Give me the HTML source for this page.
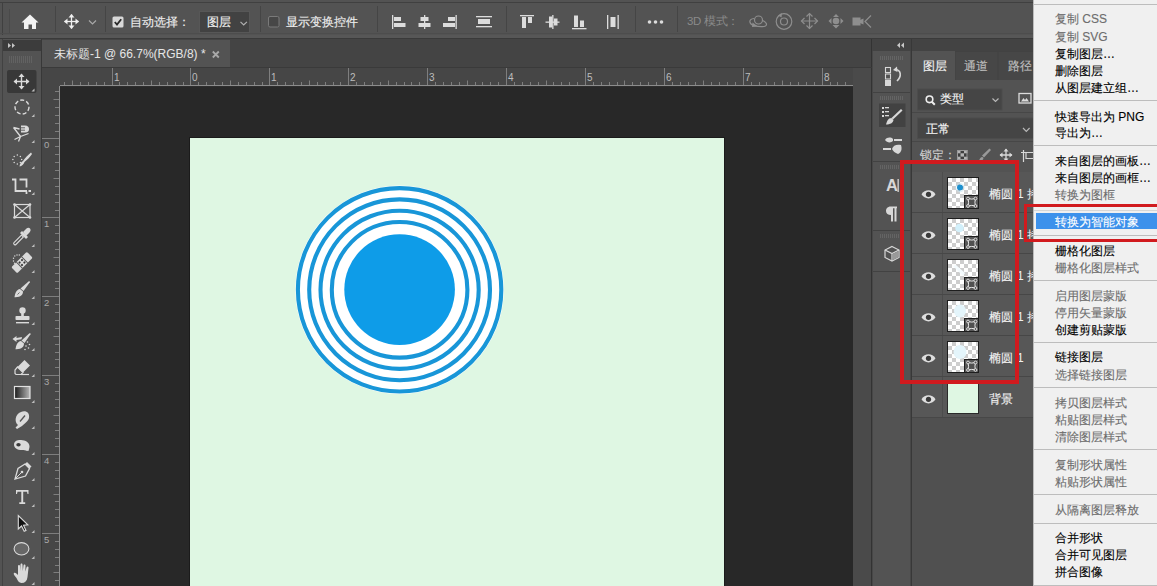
<!DOCTYPE html>
<html><head><meta charset="utf-8">
<style>
*{margin:0;padding:0;box-sizing:border-box}
html,body{width:1157px;height:586px;overflow:hidden;background:#535353;font-family:"Liberation Sans",sans-serif;}
.a{position:absolute}
svg{position:absolute;overflow:visible}
.t{position:absolute;white-space:nowrap;font-size:12px;line-height:14px;color:#e8e8e8}
.m{font-size:12px;line-height:14px;-webkit-text-stroke:0.12px currentColor}
.b{-webkit-text-stroke:0.15px currentColor}
.sep{position:absolute;width:1px;background:#3f3f3f}
</style></head><body>
<!-- options bar -->
<div class="a" style="left:0;top:0;width:1157px;height:3px;background:#535353"></div>
<div class="a" style="left:0;top:2px;width:1157px;height:1px;background:#404040"></div>
<div class="a" style="left:2px;top:2px;width:1px;height:36px;background:#404040"></div>
<div class="a" style="left:0;top:33px;width:1157px;height:1px;background:#4d4d4d"></div>
<div class="a" style="left:0;top:35px;width:1157px;height:3px;background:#575757"></div>
<div class="a" style="left:0;top:38px;width:1157px;height:1px;background:#3a3a3a"></div>


<!-- options bar content -->
<div class="sep" style="left:9px;top:9px;height:24px;background:#4a4a4a"></div>
<div class="sep" style="left:55px;top:6px;height:26px;background:#454545"></div>
<div class="sep" style="left:105px;top:6px;height:26px;background:#454545"></div>
<div class="sep" style="left:260px;top:6px;height:26px;background:#454545"></div>
<div class="sep" style="left:377px;top:6px;height:26px;background:#454545"></div>
<div class="sep" style="left:506px;top:6px;height:26px;background:#454545"></div>
<div class="sep" style="left:635px;top:6px;height:26px;background:#454545"></div>
<div class="sep" style="left:677px;top:6px;height:26px;background:#454545"></div>
<svg style="left:0;top:0" width="1157" height="38">
 <!-- home -->
 <path d="M30 14.5 L38.5 22.5 L36 22.5 L36 29 L32 29 L32 24.5 L28.5 24.5 L28.5 29 L24 29 L24 22.5 L21.5 22.5 Z" fill="#f2f2f2"/>
 <!-- move -->
 <g stroke="#f0f0f0" stroke-width="1.3" fill="#f0f0f0">
  <line x1="64.5" y1="21.5" x2="78.5" y2="21.5"/><line x1="71.5" y1="14.5" x2="71.5" y2="28.5"/>
 </g>
 <g fill="#f0f0f0">
  <path d="M71.5 14 L74.5 17.5 L68.5 17.5Z"/><path d="M71.5 29 L74.5 25.5 L68.5 25.5Z"/>
  <path d="M64 21.5 L67.5 18.5 L67.5 24.5Z"/><path d="M79 21.5 L75.5 18.5 L75.5 24.5Z"/>
 </g>
 <path d="M89 20.5 L92.5 24 L96 20.5" stroke="#a8a8a8" stroke-width="1.2" fill="none"/>
 <!-- checkbox -->
 <rect x="112.5" y="16.5" width="11" height="11" rx="1.5" fill="#d8d8d8"/>
 <path d="M114.8 22 L117 24.6 L121.2 19.2" stroke="#2a2a2a" stroke-width="1.8" fill="none"/>
 <!-- dropdown -->
 <rect x="199.5" y="11.5" width="50" height="21" fill="#424242" stroke="#575757" stroke-width="1"/>
 <path d="M240.5 21.8 L243.7 25 L246.9 21.8" stroke="#b0b0b0" stroke-width="1.2" fill="none"/>
 <!-- empty checkbox -->
 <rect x="268.5" y="16.5" width="10.5" height="10.5" rx="1.5" fill="#474747" stroke="#7a7a7a" stroke-width="1"/>
 <!-- align left -->
 <g fill="#dcdcdc">
  <rect x="392" y="15" width="1.3" height="14"/><rect x="394" y="17" width="7" height="4"/><rect x="394" y="23" width="11.5" height="4"/>
  <rect x="424" y="15" width="1.3" height="14"/><rect x="420.5" y="17" width="8" height="4"/><rect x="418.5" y="23" width="12" height="4"/>
  <rect x="455.5" y="15" width="1.3" height="14"/><rect x="448" y="17" width="7" height="4"/><rect x="443" y="23" width="12" height="4"/>
  <rect x="476" y="16" width="16" height="1.3"/><rect x="478" y="19" width="12" height="5"/><rect x="476" y="26" width="16" height="1.3"/>
  <rect x="520" y="15" width="14" height="1.3"/><rect x="522" y="17" width="4" height="11"/><rect x="528" y="17" width="4" height="6"/>
  <rect x="552.2" y="15" width="1.3" height="14"/><rect x="549" y="16.5" width="3.5" height="11"/><rect x="554" y="18.5" width="3.5" height="7"/><rect x="545.5" y="21.5" width="14" height="1.3"/>
  <rect x="572" y="28" width="14.5" height="1.3"/><rect x="574" y="15.5" width="4" height="11.5"/><rect x="580" y="20.5" width="4" height="6.5"/>
  <rect x="607" y="15" width="1.3" height="14"/><rect x="617.5" y="15" width="1.3" height="14"/><rect x="610.5" y="17" width="5" height="10"/>
  <circle cx="649.5" cy="22" r="1.8"/><circle cx="655.5" cy="22" r="1.8"/><circle cx="661.5" cy="22" r="1.8"/>
 </g>
 <!-- 3d icons -->
 <g stroke="#8e8e8e" stroke-width="1.2" fill="none">
  <circle cx="758.5" cy="20" r="4"/>
  <path d="M754 18.5 C748 19 749 24 754 25.5 C759 27 767 27.5 766.5 24 C766 22 763 20.5 762 20.3"/>
  <circle cx="784" cy="21.5" r="7.8"/><circle cx="784" cy="21.5" r="3.5"/>
  <path d="M801.5 21 H817.5 M809.5 13.5 V29"/>
  <path d="M806.5 16.5 L809.5 13.5 L812.5 16.5 M806.5 25.5 L809.5 28.5 L812.5 25.5 M804.5 18 L801.5 21 L804.5 24 M814.5 18 L817.5 21 L814.5 24"/>
  <path d="M871 15.5 L865 21.5 L871 27.5"/>
 </g>
 <g fill="#8e8e8e">
  <path d="M778 15.5 L782 13.2 L781.5 17.5Z"/>
  <path d="M752.5 22.5 L758 26.5 L752 27Z"/>
  <circle cx="836" cy="21" r="3.3"/>
  <path d="M836 14 L839 17 L833 17Z M836 28.5 L839.5 25 L832.5 25Z M828.5 21 L831.5 18 L831.5 24Z M843.5 21 L840.5 18 L840.5 24Z"/>
  <rect x="852.5" y="17.5" width="8" height="8"/><path d="M860 20 L863.5 18.5 L863.5 24.5 L860 23Z"/>
 </g>
</svg>
<div class="t b" style="left:130px;top:15px;font-size:12px;color:#ececec">自动选择：</div>
<div class="t b" style="left:207px;top:15px;font-size:12px;color:#f0f0f0">图层</div>
<div class="t b" style="left:286px;top:15px;font-size:12px;color:#ececec">显示变换控件</div>
<div class="t" style="left:687px;top:14px;font-size:11.5px;letter-spacing:-0.3px;color:#8a8a8a">3D 模式：</div>

<!-- left toolbar -->
<div class="a" style="left:0;top:39px;width:41px;height:547px;background:#535353"></div>
<div class="a" style="left:41px;top:39px;width:1px;height:547px;background:#383838"></div>
<div class="a" style="left:2px;top:39px;width:1px;height:547px;background:#424242"></div>
<div class="a" style="left:3px;top:40px;width:38px;height:11px;background:#3c3c3c"></div>

<!-- toolbar icons appended later -->
<!-- doc tab bar -->
<div class="a" style="left:42px;top:39px;width:830px;height:29px;background:#444444"></div>
<div class="a" style="left:42px;top:40px;width:188px;height:28px;background:#535353"></div>

<div class="t" style="left:54px;top:47px;font-size:12px;color:#e6e6e6">未标题-1 @ 66.7%(RGB/8) *</div>
<svg style="left:0;top:0" width="300" height="70"><path d="M212.8 51.5 L218.8 57.5 M218.8 51.5 L212.8 57.5" stroke="#a9a9a9" stroke-width="1.8"/></svg>
<!-- rulers -->
<div class="a" style="left:42px;top:68px;width:811px;height:18px;background:#464646"></div>
<div class="a" style="left:42px;top:86px;width:18px;height:500px;background:#464646"></div>

<!-- pasteboard -->
<div class="a" style="left:60px;top:86px;width:793px;height:500px;background:#282828"></div>
<div class="a" style="left:853px;top:68px;width:19px;height:518px;background:#4a4a4a"></div>
<div class="a" style="left:871px;top:39px;width:1px;height:547px;background:#333"></div>

<!-- canvas -->
<div class="a" style="left:189px;top:137px;width:536px;height:460px;background:#1b1b1b"></div>
<div class="a" style="left:190px;top:138px;width:534px;height:460px;background:#dff7e3"></div>

<!-- circles -->
<svg style="left:0;top:0" width="1157" height="586">
 <circle cx="399.6" cy="289.8" r="104.2" fill="#ffffff"/>
 <g fill="none" stroke="#1896d8" stroke-width="4.1">
  <circle cx="399.6" cy="289.8" r="101.7"/>
  <circle cx="399.6" cy="289.8" r="90.4"/>
  <circle cx="399.6" cy="289.8" r="79.1"/>
  <circle cx="399.6" cy="289.8" r="67.8"/>
 </g>
 <circle cx="399.6" cy="289.6" r="55.3" fill="#0e9ce8"/>
</svg>
<!-- ruler ticks -->
<svg style="left:0;top:0" width="1157" height="586">
<rect x="42" y="67" width="830" height="1" fill="#3a3a3a"/>
<rect x="60" y="85" width="793" height="1" fill="#8c8c8c"/>
<rect x="59" y="86" width="1" height="500" fill="#8c8c8c"/>
<rect x="60" y="86" width="793" height="1" fill="#2e2e2e"/>
<path d="M64.5 82V85M72.5 80.5V85M80.5 82V85M88.5 82V85M96.5 82V85M104.5 82V85M112.5 68V85M119.5 82V85M127.5 82V85M135.5 82V85M143.5 82V85M151.5 80.5V85M159.5 82V85M167.5 82V85M175.5 82V85M183.5 82V85M190.5 68V85M198.5 82V85M206.5 82V85M214.5 82V85M222.5 82V85M230.5 80.5V85M238.5 82V85M246.5 82V85M254.5 82V85M262.5 82V85M269.5 68V85M277.5 82V85M285.5 82V85M293.5 82V85M301.5 82V85M309.5 80.5V85M317.5 82V85M325.5 82V85M333.5 82V85M340.5 82V85M348.5 68V85M356.5 82V85M364.5 82V85M372.5 82V85M380.5 82V85M388.5 80.5V85M396.5 82V85M404.5 82V85M411.5 82V85M419.5 82V85M427.5 68V85M435.5 82V85M443.5 82V85M451.5 82V85M459.5 82V85M467.5 80.5V85M475.5 82V85M482.5 82V85M490.5 82V85M498.5 82V85M506.5 68V85M514.5 82V85M522.5 82V85M530.5 82V85M538.5 82V85M546.5 80.5V85M553.5 82V85M561.5 82V85M569.5 82V85M577.5 82V85M585.5 68V85M593.5 82V85M601.5 82V85M609.5 82V85M617.5 82V85M624.5 80.5V85M632.5 82V85M640.5 82V85M648.5 82V85M656.5 82V85M664.5 68V85M672.5 82V85M680.5 82V85M688.5 82V85M695.5 82V85M703.5 80.5V85M711.5 82V85M719.5 82V85M727.5 82V85M735.5 82V85M743.5 68V85M751.5 82V85M759.5 82V85M766.5 82V85M774.5 82V85M782.5 80.5V85M790.5 82V85M798.5 82V85M806.5 82V85M814.5 82V85M822.5 68V85M830.5 82V85M837.5 82V85M845.5 82V85" stroke="#7e7e7e" stroke-width="1"/>
<path d="M55 91.5H59M53.5 99.5H59M55 107.5H59M55 115.5H59M55 123.5H59M55 131.5H59M42 138.5H59M55 146.5H59M55 154.5H59M55 162.5H59M55 170.5H59M53.5 178.5H59M55 186.5H59M55 194.5H59M55 202.5H59M55 210.5H59M42 217.5H59M55 225.5H59M55 233.5H59M55 241.5H59M55 249.5H59M53.5 257.5H59M55 265.5H59M55 273.5H59M55 281.5H59M55 288.5H59M42 296.5H59M55 304.5H59M55 312.5H59M55 320.5H59M55 328.5H59M53.5 336.5H59M55 344.5H59M55 352.5H59M55 359.5H59M55 367.5H59M42 375.5H59M55 383.5H59M55 391.5H59M55 399.5H59M55 407.5H59M53.5 415.5H59M55 423.5H59M55 430.5H59M55 438.5H59M55 446.5H59M42 454.5H59M55 462.5H59M55 470.5H59M55 478.5H59M55 486.5H59M53.5 494.5H59M55 501.5H59M55 509.5H59M55 517.5H59M55 525.5H59M42 533.5H59M55 541.5H59M55 549.5H59M55 557.5H59M55 565.5H59M53.5 572.5H59M55 580.5H59" stroke="#7e7e7e" stroke-width="1"/>
</svg>
<div class="t" style="left:114px;top:72px;font-size:10px;line-height:11px;color:#bdbdbd">1</div>
<div class="t" style="left:192px;top:72px;font-size:10px;line-height:11px;color:#bdbdbd">0</div>
<div class="t" style="left:271px;top:72px;font-size:10px;line-height:11px;color:#bdbdbd">1</div>
<div class="t" style="left:350px;top:72px;font-size:10px;line-height:11px;color:#bdbdbd">2</div>
<div class="t" style="left:429px;top:72px;font-size:10px;line-height:11px;color:#bdbdbd">3</div>
<div class="t" style="left:508px;top:72px;font-size:10px;line-height:11px;color:#bdbdbd">4</div>
<div class="t" style="left:587px;top:72px;font-size:10px;line-height:11px;color:#bdbdbd">5</div>
<div class="t" style="left:666px;top:72px;font-size:10px;line-height:11px;color:#bdbdbd">6</div>
<div class="t" style="left:745px;top:72px;font-size:10px;line-height:11px;color:#bdbdbd">7</div>
<div class="t" style="left:824px;top:72px;font-size:10px;line-height:11px;color:#bdbdbd">8</div>
<div class="t" style="left:44px;top:139px;font-size:9.5px;line-height:11px;color:#a9a9a9">0</div>
<div class="t" style="left:44px;top:218px;font-size:9.5px;line-height:11px;color:#a9a9a9">1</div>
<div class="t" style="left:44px;top:297px;font-size:9.5px;line-height:11px;color:#a9a9a9">2</div>
<div class="t" style="left:44px;top:376px;font-size:9.5px;line-height:11px;color:#a9a9a9">3</div>
<div class="t" style="left:44px;top:455px;font-size:9.5px;line-height:11px;color:#a9a9a9">4</div>
<div class="t" style="left:44px;top:534px;font-size:9.5px;line-height:11px;color:#a9a9a9">5</div>
<!-- left tools -->
<svg style="left:0;top:0" width="42" height="586">
 <g fill="#c4c4c4"><path d="M8 43 L11 45.5 L8 48Z M12 43 L15 45.5 L12 48Z"/></g>
 <g stroke="#626262" stroke-width="1"><path d="M9.5 56V63M11.5 56V63M13.5 56V63M15.5 56V63M17.5 56V63M19.5 56V63M21.5 56V63M23.5 56V63M25.5 56V63M27.5 56V63M29.5 56V63M31.5 56V63"/></g>
 <rect x="7" y="70" width="29.5" height="23" rx="2" fill="#383838"/>
 <!-- move -->
 <g stroke="#dadada" stroke-width="1.4" fill="none"><path d="M14.5 81.5H28.5M21.5 74.5V88.5"/></g>
 <g fill="#dadada"><path d="M21.5 73.5L24.5 77H18.5Z M21.5 89.5L24.5 86H18.5Z M13.5 81.5L17 78.5V84.5Z M29.5 81.5L26 78.5V84.5Z"/></g>
 <!-- small triangles -->
 <g fill="#bdbdbd">
  <path d="M34.5 88.5V91.5H31.5Z"/><path d="M34.5 114V117H31.5Z"/><path d="M34.5 140V143H31.5Z"/><path d="M34.5 166V169H31.5Z"/>
  <path d="M34.5 192V195H31.5Z"/><path d="M34.5 244V247H31.5Z"/><path d="M34.5 270V273H31.5Z"/><path d="M34.5 296V299H31.5Z"/>
  <path d="M34.5 322V325H31.5Z"/><path d="M34.5 348V351H31.5Z"/><path d="M34.5 374V377H31.5Z"/><path d="M34.5 400V403H31.5Z"/>
  <path d="M34.5 426V429H31.5Z"/><path d="M34.5 452V455H31.5Z"/><path d="M34.5 478V481H31.5Z"/><path d="M34.5 504V507H31.5Z"/>
  <path d="M34.5 530V533H31.5Z"/><path d="M34.5 556V559H31.5Z"/><path d="M34.5 582V585H31.5Z"/>
 </g>
 <!-- marquee -->
 <circle cx="22" cy="107" r="7" fill="none" stroke="#dadada" stroke-width="1.4" stroke-dasharray="4 2.2"/>
 <!-- lasso -->
 <g fill="none" stroke="#dadada" stroke-width="1.3">
  <path d="M13.5 127.5 L19.5 129 M13.5 127.5 L20.5 136.5 M20.5 136.5 L14.5 139.5 M20.5 136.5 L18.5 141.5 M20.5 136.5 L28.5 133.5"/>
 </g>
 <path d="M21 125.5 H25 C28 125.5 29 127.5 29 129 C29 131 28 132.5 25 132.5 H21Z" fill="#dadada"/>
 <path d="M21 127.8 H25 M21 130.2 H25" stroke="#535353" stroke-width="0.9"/>
 <!-- quick select -->
 <g fill="#dadada">
  <circle cx="17.3" cy="155.1" r=".75"/><circle cx="20.4" cy="156.4" r=".75"/><circle cx="21.7" cy="159.5" r=".75"/><circle cx="20.4" cy="162.6" r=".75"/>
  <circle cx="17.3" cy="163.9" r=".75"/><circle cx="14.2" cy="162.6" r=".75"/><circle cx="12.9" cy="159.5" r=".75"/><circle cx="14.2" cy="156.4" r=".75"/>
 </g>
 <path d="M31 152.5 L32 154 C30 157 27 160 24.5 162 C23.5 164.5 22 166 19.5 166.5 C19.8 164 21 162 23 161 C25 158 28 155 31 152.5Z" fill="#dadada"/>
 <!-- crop -->
 <g fill="none" stroke="#dadada" stroke-width="1.8">
  <path d="M12 179.5H15.5V191H27M19.5 179.5H26.5V187.5M26.5 191.5V194M28.5 191H31"/>
 </g>
 <!-- frame -->
 <g fill="none" stroke="#dadada" stroke-width="1.2"><rect x="14.5" y="204.5" width="15.5" height="13"/><path d="M14.5 204.5L30 217.5M30 204.5L14.5 217.5"/></g>
 <g fill="#dadada"><circle cx="14.5" cy="204.5" r="1.3"/><circle cx="30" cy="204.5" r="1.3"/><circle cx="14.5" cy="217.5" r="1.3"/><circle cx="30" cy="217.5" r="1.3"/></g>
 <!-- eyedropper -->
 <path d="M14.6 244.8 L13.8 244 C13.5 243.5 13.6 243 14 242.6 L21.5 235.1 L23.4 237 L15.9 244.5 C15.5 244.9 15 245 14.6 244.8Z" fill="none" stroke="#dadada" stroke-width="1.1"/>
 <path d="M20 233 L22 231 L28 237 L26 239Z" fill="#dadada"/>
 <path d="M23 232 L26.5 228.5 C27.5 227.5 29.5 227.5 30.2 228.8 C31 230 30.5 231.5 29.5 232.5 L26 236Z" fill="#dadada"/>
 <!-- healing -->
 <g transform="rotate(-45 22 262.5)">
  <rect x="11" y="258.3" width="22" height="8.4" rx="1.5" fill="#dadada"/>
  <rect x="17.8" y="258.3" width="0.9" height="8.4" fill="#535353"/><rect x="25.3" y="258.3" width="0.9" height="8.4" fill="#535353"/>
  <g fill="#3a3a3a"><circle cx="20.3" cy="260.8" r="1.1"/><circle cx="23.7" cy="260.8" r="1.1"/><circle cx="20.3" cy="264.2" r="1.1"/><circle cx="23.7" cy="264.2" r="1.1"/></g>
 </g>
 <g fill="#dadada"><circle cx="13.5" cy="261" r=".7"/><circle cx="13.5" cy="258.3" r=".7"/><circle cx="14.8" cy="256" r=".7"/><circle cx="17" cy="255" r=".7"/><circle cx="19.3" cy="255" r=".7"/><circle cx="14.5" cy="263.3" r=".7"/></g>
 <!-- brush -->
 <path d="M28.5 281.5 C29.5 281 30 281.5 29.8 282.3 L23.5 291 L20.5 288.5Z" fill="#dadada"/>
 <path d="M20 289 L23 291.5 C23 295 20.5 297.5 14.5 297.2 C15 293 16.5 289.5 20 289Z" fill="#dadada"/>
 <path d="M17.5 294.5 L19.5 292.5" stroke="#535353" stroke-width=".8"/>
 <!-- stamp -->
 <circle cx="22.5" cy="310.5" r="3.2" fill="#dadada"/><rect x="21.2" y="312" width="2.6" height="4.5" fill="#dadada"/>
 <rect x="15.5" y="316" width="14" height="4" rx=".8" fill="#dadada"/><rect x="16" y="322" width="13" height="1.4" fill="#dadada"/>
 <!-- history brush -->
 <path d="M29.2 333.5 C30.2 333 30.8 333.5 30.5 334.3 L24.5 343 L21.5 340.5Z" fill="#dadada"/>
 <path d="M21 341 L24 343.5 C24 347 21.5 349.5 15.5 349.2 C16 345 17.5 341.5 21 341Z" fill="#dadada"/>
 <path d="M12.5 339 L16.5 336 L16.5 338 L22 337 L21.5 339.2 L16.5 340 L16.5 342Z" fill="#dadada"/>
 <g fill="#dadada"><circle cx="27.5" cy="342" r=".8"/><circle cx="29.5" cy="344.5" r=".8"/><circle cx="26" cy="346" r=".8"/><circle cx="28.5" cy="348" r=".8"/><circle cx="25" cy="349.5" r=".8"/></g>
 <!-- eraser -->
 <path d="M24.5 360 L30 365.5 L23 372.5 L17.5 367Z" fill="#dadada"/>
 <path d="M17.5 367 L23 372.5 L21 374.5 L16 374.5 L15 373.5 L15 370Z" fill="none" stroke="#dadada" stroke-width="1.2"/>
 <path d="M21 374.5 H29" stroke="#dadada" stroke-width="1.2"/>
 <!-- gradient -->
 <defs><linearGradient id="gg" x1="0" y1="0" x2="1" y2="0"><stop offset="0" stop-color="#1a1a1a"/><stop offset="1" stop-color="#b8b8b8"/></linearGradient></defs>
 <rect x="14.5" y="386.5" width="15.5" height="12" fill="url(#gg)" stroke="#e0e0e0" stroke-width="1.2"/>
 <!-- blur -->
 <path d="M18 425 C14 422 15 414 21 412 C26 410 30 413 29 418 C28.5 421 25 423 22 426 L17 429 L15.5 427.5Z" fill="#dadada"/>
 <path d="M20 421.5 L25 415.5" stroke="#535353" stroke-width="1.3"/>
 <!-- dodge -->
 <path d="M14 444.5 C14 441 17.5 439.8 21 440 C25.5 440.2 29.5 442.5 29.5 446.5 C29.5 448.5 28.5 449.5 29 450.5 L27 451 C25.5 450 24 450 22 450 C17 450 14 448 14 444.5Z" fill="#dadada"/>
 <ellipse cx="18.5" cy="444.8" rx="2.2" ry="1.7" fill="#3a3a3a"/>
 <!-- pen -->
 <path d="M25 464 L29.5 468.5 L25.5 476 L15 479 L18 468.5Z" fill="none" stroke="#dadada" stroke-width="1.3"/>
 <path d="M25 464 L27 462 L31.5 466.5 L29.5 468.5Z" fill="#dadada"/>
 <path d="M15 479 L21.5 472.5" stroke="#dadada" stroke-width="1"/><circle cx="22" cy="472" r="1.3" fill="#dadada"/>
 <!-- type -->
 <path d="M16 490H28.5V494H27.5L27 491.8H23.2V502.3H25.2V504H19.3V502.3H21.3V491.8H17.5L17 494H16Z" fill="#dadada"/>
 <!-- path select -->
 <path d="M18.3 515.5 L18.3 529 L21.5 526 L24.2 531.3 L26 530.4 L23.5 525.2 L27.8 524.8Z" fill="#111" stroke="#dadada" stroke-width="1.1"/>
 <!-- ellipse -->
 <ellipse cx="21.5" cy="548.8" rx="7.4" ry="6.2" fill="#676767" stroke="#dadada" stroke-width="1.1"/>
 <!-- hand -->
 <path d="M16.5 578 C15 576 13 574 14 573 C15 572 17 574 18 575 L18 566 C18 564.5 20 564.5 20 566 L20 571 L20.5 564.5 C20.5 563 22.5 563 22.5 564.5 L22.8 571 L23.5 565.5 C23.5 564 25.5 564 25.5 565.5 L25.3 571.5 L26.5 567.5 C27 566 28.8 566.5 28.5 568 L27.5 577 C27 581 25 583 21.5 583 C19 583 17.5 580.5 16.5 578Z" fill="#dadada"/>
</svg>
<!-- right icon column -->
<div class="a" style="left:872px;top:39px;width:40px;height:547px;background:#535353"></div>
<div class="a" style="left:872px;top:40px;width:40px;height:11px;background:#3c3c3c"></div>

<!-- layers panel -->
<div class="a" style="left:912px;top:39px;width:122px;height:547px;background:#535353"></div>
<svg style="left:0;top:0" width="1157" height="586">
 <defs>
  <pattern id="chk" x="948" y="178" width="8" height="8" patternUnits="userSpaceOnUse">
   <rect width="8" height="8" fill="#ffffff"/><rect width="4" height="4" fill="#cdcdcd"/><rect x="4" y="4" width="4" height="4" fill="#cdcdcd"/>
  </pattern>
 </defs>
 <!-- header band -->
 <rect x="872" y="39" width="161" height="12" fill="#434343"/>
 <path d="M900 42.5 L897 45.3 L900 48 Z M904 42.5 L901 45.3 L904 48Z" fill="#c8c8c8"/>
 <!-- column borders -->
 <rect x="872" y="51" width="1" height="535" fill="#474747"/>
 <rect x="910" y="51" width="1" height="535" fill="#474747"/>
 <rect x="911" y="39" width="1" height="547" fill="#383838"/>
 <!-- separators in icon column -->
 <rect x="873" y="92" width="37" height="1" fill="#424242"/>
 <rect x="873" y="161" width="37" height="1" fill="#424242"/>
 <rect x="873" y="230" width="37" height="1" fill="#424242"/>
 <rect x="873" y="271" width="37" height="1" fill="#424242"/>
 <g stroke="#646464" stroke-width="1">
  <path d="M880.5 56V60M882.5 56V60M884.5 56V60M886.5 56V60M888.5 56V60M890.5 56V60M892.5 56V60M894.5 56V60M896.5 56V60M898.5 56V60M900.5 56V60M902.5 56V60"/>
  <path d="M880.5 96V100M882.5 96V100M884.5 96V100M886.5 96V100M888.5 96V100M890.5 96V100M892.5 96V100M894.5 96V100M896.5 96V100M898.5 96V100M900.5 96V100M902.5 96V100"/>
  <path d="M880.5 165V169M882.5 165V169M884.5 165V169M886.5 165V169M888.5 165V169M890.5 165V169M892.5 165V169M894.5 165V169M896.5 165V169M898.5 165V169M900.5 165V169M902.5 165V169"/>
  <path d="M880.5 234V238M882.5 234V238M884.5 234V238M886.5 234V238M888.5 234V238M890.5 234V238M892.5 234V238M894.5 234V238M896.5 234V238M898.5 234V238M900.5 234V238M902.5 234V238"/>
 </g>
 <!-- history icon -->
 <g fill="none" stroke="#d8d8d8" stroke-width="1.1"><rect x="885.5" y="67.5" width="5" height="5"/><rect x="885.5" y="74" width="5" height="5"/></g>
 <rect x="885" y="80" width="6" height="6" fill="#d8d8d8"/>
 <path d="M895.5 69.5 C901 70 902 76 897 81" fill="none" stroke="#d8d8d8" stroke-width="1.6"/>
 <path d="M893 70 L897 66.5 L897.5 72Z" fill="#d8d8d8"/>
 <!-- brush settings selected -->
 <rect x="879" y="103.5" width="26.5" height="23.5" fill="#424242"/>
 <g fill="#d8d8d8"><rect x="882" y="107" width="2" height="2"/><rect x="885" y="107" width="4" height="1.3"/><rect x="882" y="111" width="2" height="2"/><rect x="885" y="111" width="4" height="1.3"/><rect x="882" y="115" width="2" height="2"/><rect x="885" y="115" width="4" height="1.3"/></g>
 <path d="M901 109 L902.5 110.5 L893 119.5 L891.5 118Z" fill="#d8d8d8"/>
 <path d="M891.5 118 C888 118 887 121 886 124.5 C890 124.5 893 123 893.5 120Z" fill="#d8d8d8"/>
 <!-- brush presets / adjust -->
 <path d="M885 140 C887 137 891 137 893 139 L893 141 C891 143 887 143 885 140Z" fill="#d8d8d8"/>
 <rect x="894" y="139" width="8" height="2" fill="#d8d8d8"/>
 <rect x="883" y="148" width="8" height="2" fill="#d8d8d8"/>
 <path d="M892 149 C893 145 897 144 901 145 C902 148 902 152 898 154 C895 153 893 151 892 149Z" fill="#d8d8d8"/>
 <!-- A| -->
 <rect x="897.5" y="179" width="1.3" height="13" fill="#d8d8d8"/>
 <!-- pilcrow -->
 <path d="M897 206.5 H891 C887 206.5 886 209 886 211 C886 213.5 888 215 891 215 V221.5 H893 V208.3 H894.5 V221.5 H896.5 V208.3 H897Z" fill="#d8d8d8"/>
 <!-- cube -->
 <path d="M892 246.5 L899 250 L899 257.5 L892 261 L885 257.5 L885 250Z" fill="none" stroke="#d8d8d8" stroke-width="1.2"/>
 <path d="M885 250 L892 253.5 L899 250 M892 253.5 V261" fill="none" stroke="#d8d8d8" stroke-width="1.2"/>
 <path d="M892.6 254 L898.4 251 L898.4 257.2 L892.6 260.2Z" fill="#9a9a9a"/>

 <!-- layers tabs -->
 <rect x="912" y="51" width="121" height="29" fill="#424242"/>
 <rect x="912" y="51" width="43" height="30" fill="#535353"/>
 <rect x="955.5" y="52" width="42" height="28" fill="#474747"/>
 <rect x="998.5" y="52" width="35" height="28" fill="#474747"/>
 <!-- filter dropdown -->
 <rect x="917.5" y="89" width="84.5" height="21" fill="#454545" stroke="#4c4c4c" stroke-width="1"/>
 <circle cx="929.5" cy="99.3" r="3.3" fill="none" stroke="#eeeeee" stroke-width="1.6"/>
 <path d="M931.8 101.7 L934.8 104.7" stroke="#eeeeee" stroke-width="2"/>
 <path d="M992.5 98.5 L995.5 101.5 L998.5 98.5" stroke="#b8b8b8" stroke-width="1.2" fill="none"/>
 <rect x="1019" y="93.5" width="12" height="9.5" fill="none" stroke="#dcdcdc" stroke-width="1.3"/>
 <path d="M1021 101.5 L1023.5 98 L1025 100 L1026.5 98 L1029 101.5Z" fill="#dcdcdc"/>
 <rect x="912" y="112" width="121" height="1" fill="#474747"/>
 <!-- blend mode -->
 <rect x="917.5" y="118" width="116" height="20.5" fill="#454545" stroke="#4c4c4c" stroke-width="1"/>
 <path d="M1023 128 L1026.3 131.3 L1029.6 128" stroke="#b8b8b8" stroke-width="1.2" fill="none"/>
 <rect x="912" y="141" width="121" height="1" fill="#474747"/>
 <!-- lock icons -->
 <rect x="957" y="150" width="10.5" height="10" fill="#3e3e3e"/>
 <g fill="#b4b4b4"><rect x="957" y="150" width="3.5" height="3.3"/><rect x="964" y="150" width="3.5" height="3.3"/><rect x="960.5" y="153.3" width="3.5" height="3.3"/><rect x="957" y="156.7" width="3.5" height="3.3"/><rect x="964" y="156.7" width="3.5" height="3.3"/></g>
 <rect x="957.5" y="150.5" width="9.5" height="9" fill="none" stroke="#9a9a9a" stroke-width="1"/>
 <path d="M989.5 148.5 L991 150 L984 157.5 L982 155.5Z" fill="#9a9a9a"/><path d="M982.5 157 C980.5 157 979.5 159 979 161 C981.5 161 983.5 160 983.5 158Z" fill="#9a9a9a"/>
 <g stroke="#d8d8d8" stroke-width="1.3" fill="none"><path d="M1000 155H1012M1006 149V161"/></g>
 <g fill="#d8d8d8"><path d="M1006 148.5L1008.5 151.5H1003.5Z M1006 161.5L1008.5 158.5H1003.5Z M999.5 155L1002.5 152.5V157.5Z M1012.5 155L1009.5 152.5V157.5Z"/></g>
 <path d="M1023.5 150 V162 M1021 152.5 H1033 M1026 152.5 V158.5 H1033" stroke="#d8d8d8" stroke-width="1.2" fill="none"/>
</svg>
<div class="t" style="left:886px;top:177px;font-size:16.5px;line-height:17px;font-weight:bold;color:#d8d8d8">A</div>
<div class="t b" style="left:923px;top:59px;font-size:12px;color:#f0f0f0">图层</div>
<div class="t b" style="left:964px;top:59px;font-size:12px;color:#bdbdbd">通道</div>
<div class="t b" style="left:1008px;top:59px;font-size:12px;color:#bdbdbd">路径</div>
<div class="t b" style="left:940px;top:92px;font-size:12px;color:#f2f2f2">类型</div>
<div class="t b" style="left:926px;top:122px;font-size:12px;color:#f2f2f2">正常</div>
<div class="t b" style="left:920px;top:148px;font-size:12px;color:#d0d0d0">锁定：</div>


<!-- layer rows -->
<svg style="left:0;top:0" width="0" height="0"><defs><pattern id="chk0" x="948" y="178" width="8" height="8" patternUnits="userSpaceOnUse"><rect width="8" height="8" fill="#ffffff"/><rect x="4" width="4" height="4" fill="#cdcdcd"/><rect y="4" width="4" height="4" fill="#cdcdcd"/></pattern><pattern id="chk1" x="948" y="219" width="8" height="8" patternUnits="userSpaceOnUse"><rect width="8" height="8" fill="#ffffff"/><rect x="4" width="4" height="4" fill="#cdcdcd"/><rect y="4" width="4" height="4" fill="#cdcdcd"/></pattern><pattern id="chk2" x="948" y="260" width="8" height="8" patternUnits="userSpaceOnUse"><rect width="8" height="8" fill="#ffffff"/><rect x="4" width="4" height="4" fill="#cdcdcd"/><rect y="4" width="4" height="4" fill="#cdcdcd"/></pattern><pattern id="chk3" x="948" y="301" width="8" height="8" patternUnits="userSpaceOnUse"><rect width="8" height="8" fill="#ffffff"/><rect x="4" width="4" height="4" fill="#cdcdcd"/><rect y="4" width="4" height="4" fill="#cdcdcd"/></pattern><pattern id="chk4" x="948" y="342" width="8" height="8" patternUnits="userSpaceOnUse"><rect width="8" height="8" fill="#ffffff"/><rect x="4" width="4" height="4" fill="#cdcdcd"/><rect y="4" width="4" height="4" fill="#cdcdcd"/></pattern></defs></svg>
<svg style="left:0;top:0" width="1157" height="586">
<rect x="912" y="172" width="121" height="40" fill="#575757"/>
<rect x="912" y="212" width="121" height="1" fill="#474747"/>
<rect x="942" y="172" width="1" height="40" fill="#4c4c4c"/>
<path d="M921.5 194.3 C924.5 188.8 932.5 188.8 935.5 194.3 C932.5 199.8 924.5 199.8 921.5 194.3Z" fill="#dedede"/>
<circle cx="928.5" cy="194.3" r="2.6" fill="#3a3a3a"/>
<rect x="947" y="177" width="32" height="32" fill="#1e1e1e"/>
<rect x="948" y="178" width="30" height="30" fill="url(#chk0)"/>
<circle cx="960" cy="187.6" r="3" fill="#1c90cf"/><circle cx="960" cy="187.6" r="4.2" fill="none" stroke="#bfe6f7" stroke-width="1" opacity=".6"/>
<rect x="964" y="195" width="15" height="14" fill="#1e1e1e"/>
<rect x="965" y="196" width="13" height="12" fill="#585858"/>
<path d="M968 198.5 Q971.75 199.7 975.5 198.5 Q974.3 202.25 975.5 206 Q971.75 204.8 968 206 Q969.2 202.25 968 198.5Z" fill="#505050" stroke="#e8e8e8" stroke-width="1"/><g fill="#505050" stroke="#e8e8e8" stroke-width=".9"><circle cx="968" cy="198.5" r="1.4"/><circle cx="975.5" cy="198.5" r="1.4"/><circle cx="968" cy="206" r="1.4"/><circle cx="975.5" cy="206" r="1.4"/></g>

<rect x="912" y="213" width="121" height="40" fill="#575757"/>
<rect x="912" y="253" width="121" height="1" fill="#474747"/>
<rect x="942" y="213" width="1" height="40" fill="#4c4c4c"/>
<path d="M921.5 235.3 C924.5 229.8 932.5 229.8 935.5 235.3 C932.5 240.8 924.5 240.8 921.5 235.3Z" fill="#dedede"/>
<circle cx="928.5" cy="235.3" r="2.6" fill="#3a3a3a"/>
<rect x="947" y="218" width="32" height="32" fill="#1e1e1e"/>
<rect x="948" y="219" width="30" height="30" fill="url(#chk1)"/>
<circle cx="959.5" cy="228" r="4.3" fill="#d2f0fb"/>
<rect x="964" y="236" width="15" height="14" fill="#1e1e1e"/>
<rect x="965" y="237" width="13" height="12" fill="#585858"/>
<path d="M968 239.5 Q971.75 240.7 975.5 239.5 Q974.3 243.25 975.5 247 Q971.75 245.8 968 247 Q969.2 243.25 968 239.5Z" fill="#505050" stroke="#e8e8e8" stroke-width="1"/><g fill="#505050" stroke="#e8e8e8" stroke-width=".9"><circle cx="968" cy="239.5" r="1.4"/><circle cx="975.5" cy="239.5" r="1.4"/><circle cx="968" cy="247" r="1.4"/><circle cx="975.5" cy="247" r="1.4"/></g>

<rect x="912" y="254" width="121" height="40" fill="#575757"/>
<rect x="912" y="294" width="121" height="1" fill="#474747"/>
<rect x="942" y="254" width="1" height="40" fill="#4c4c4c"/>
<path d="M921.5 276.3 C924.5 270.8 932.5 270.8 935.5 276.3 C932.5 281.8 924.5 281.8 921.5 276.3Z" fill="#dedede"/>
<circle cx="928.5" cy="276.3" r="2.6" fill="#3a3a3a"/>
<rect x="947" y="259" width="32" height="32" fill="#1e1e1e"/>
<rect x="948" y="260" width="30" height="30" fill="url(#chk2)"/>
<path d="M953 266 L956 265 L965 273 L963 276Z" fill="#f4fbfe"/>
<rect x="964" y="277" width="15" height="14" fill="#1e1e1e"/>
<rect x="965" y="278" width="13" height="12" fill="#585858"/>
<path d="M968 280.5 Q971.75 281.7 975.5 280.5 Q974.3 284.25 975.5 288 Q971.75 286.8 968 288 Q969.2 284.25 968 280.5Z" fill="#505050" stroke="#e8e8e8" stroke-width="1"/><g fill="#505050" stroke="#e8e8e8" stroke-width=".9"><circle cx="968" cy="280.5" r="1.4"/><circle cx="975.5" cy="280.5" r="1.4"/><circle cx="968" cy="288" r="1.4"/><circle cx="975.5" cy="288" r="1.4"/></g>

<rect x="912" y="295" width="121" height="40" fill="#575757"/>
<rect x="912" y="335" width="121" height="1" fill="#474747"/>
<rect x="942" y="295" width="1" height="40" fill="#4c4c4c"/>
<path d="M921.5 317.3 C924.5 311.8 932.5 311.8 935.5 317.3 C932.5 322.8 924.5 322.8 921.5 317.3Z" fill="#dedede"/>
<circle cx="928.5" cy="317.3" r="2.6" fill="#3a3a3a"/>
<rect x="947" y="300" width="32" height="32" fill="#1e1e1e"/>
<rect x="948" y="301" width="30" height="30" fill="url(#chk3)"/>
<ellipse cx="960" cy="311" rx="6" ry="6.5" fill="#e4f5fb"/>
<rect x="964" y="318" width="15" height="14" fill="#1e1e1e"/>
<rect x="965" y="319" width="13" height="12" fill="#585858"/>
<path d="M968 321.5 Q971.75 322.7 975.5 321.5 Q974.3 325.25 975.5 329 Q971.75 327.8 968 329 Q969.2 325.25 968 321.5Z" fill="#505050" stroke="#e8e8e8" stroke-width="1"/><g fill="#505050" stroke="#e8e8e8" stroke-width=".9"><circle cx="968" cy="321.5" r="1.4"/><circle cx="975.5" cy="321.5" r="1.4"/><circle cx="968" cy="329" r="1.4"/><circle cx="975.5" cy="329" r="1.4"/></g>

<rect x="912" y="336" width="121" height="40" fill="#575757"/>
<rect x="912" y="376" width="121" height="1" fill="#474747"/>
<rect x="942" y="336" width="1" height="40" fill="#4c4c4c"/>
<path d="M921.5 358.3 C924.5 352.8 932.5 352.8 935.5 358.3 C932.5 363.8 924.5 363.8 921.5 358.3Z" fill="#dedede"/>
<circle cx="928.5" cy="358.3" r="2.6" fill="#3a3a3a"/>
<rect x="947" y="341" width="32" height="32" fill="#1e1e1e"/>
<rect x="948" y="342" width="30" height="30" fill="url(#chk4)"/>
<ellipse cx="960" cy="352" rx="6.5" ry="7" fill="#e4f5fb"/>
<rect x="964" y="359" width="15" height="14" fill="#1e1e1e"/>
<rect x="965" y="360" width="13" height="12" fill="#585858"/>
<path d="M968 362.5 Q971.75 363.7 975.5 362.5 Q974.3 366.25 975.5 370 Q971.75 368.8 968 370 Q969.2 366.25 968 362.5Z" fill="#505050" stroke="#e8e8e8" stroke-width="1"/><g fill="#505050" stroke="#e8e8e8" stroke-width=".9"><circle cx="968" cy="362.5" r="1.4"/><circle cx="975.5" cy="362.5" r="1.4"/><circle cx="968" cy="370" r="1.4"/><circle cx="975.5" cy="370" r="1.4"/></g>

<rect x="912" y="377" width="121" height="40" fill="#575757"/>
<rect x="912" y="417" width="121" height="1" fill="#474747"/>
<rect x="942" y="377" width="1" height="40" fill="#4c4c4c"/>
<path d="M921.5 399.3 C924.5 393.8 932.5 393.8 935.5 399.3 C932.5 404.8 924.5 404.8 921.5 399.3Z" fill="#dedede"/>
<circle cx="928.5" cy="399.3" r="2.6" fill="#3a3a3a"/>
<rect x="947" y="384" width="32" height="30" fill="#2a2a2a"/>
<rect x="948" y="384" width="30" height="29" fill="#dff7e3"/>
<rect x="912" y="418" width="121" height="168" fill="#505050"/>
</svg>
<div class="t b" style="left:989px;top:187px;font-size:12px;color:#f0f0f0">椭圆</div><div class="t" style="left:1017px;top:187px;font-size:12px;color:#f0f0f0">1 拷贝</div>
<div class="t b" style="left:989px;top:228px;font-size:12px;color:#f0f0f0">椭圆</div><div class="t" style="left:1017px;top:228px;font-size:12px;color:#f0f0f0">1 拷贝</div>
<div class="t b" style="left:989px;top:269px;font-size:12px;color:#f0f0f0">椭圆</div><div class="t" style="left:1017px;top:269px;font-size:12px;color:#f0f0f0">1 拷贝</div>
<div class="t b" style="left:989px;top:310px;font-size:12px;color:#f0f0f0">椭圆</div><div class="t" style="left:1017px;top:310px;font-size:12px;color:#f0f0f0">1 拷贝</div>
<div class="t b" style="left:989px;top:351px;font-size:12px;color:#f0f0f0">椭圆</div><div class="t" style="left:1017px;top:351px;font-size:12px;color:#f0f0f0">1</div>
<div class="t b" style="left:989px;top:392px;font-size:12px;color:#f0f0f0">背景</div>
<!-- context menu -->
<div class="a" style="left:1033px;top:0;width:124px;height:586px;background:#f0f0f0"></div>
<div class="a" style="left:1033px;top:0;width:1px;height:586px;background:#bcbcbc"></div>
<div class="a" style="left:1034px;top:4px;width:123px;height:1px;background:#bdbdbd"></div>
<div class="a" style="left:1034px;top:100px;width:123px;height:1px;background:#bdbdbd"></div>
<div class="a" style="left:1034px;top:145px;width:123px;height:1px;background:#bdbdbd"></div>
<div class="a" style="left:1034px;top:210px;width:123px;height:1px;background:#d6d6d6"></div>
<div class="a" style="left:1034px;top:235px;width:123px;height:1px;background:#bdbdbd"></div>
<div class="a" style="left:1034px;top:280px;width:123px;height:1px;background:#bdbdbd"></div>
<div class="a" style="left:1034px;top:342px;width:123px;height:1px;background:#bdbdbd"></div>
<div class="a" style="left:1034px;top:387px;width:123px;height:1px;background:#bdbdbd"></div>
<div class="a" style="left:1034px;top:449px;width:123px;height:1px;background:#bdbdbd"></div>
<div class="a" style="left:1034px;top:494px;width:123px;height:1px;background:#bdbdbd"></div>
<div class="a" style="left:1034px;top:523px;width:123px;height:1px;background:#bdbdbd"></div>
<div class="a" style="left:1034px;top:585px;width:123px;height:1px;background:#bdbdbd"></div>
<div class="t m" style="left:1055px;top:12px;color:#6d6d6d">复制 CSS</div>
<div class="t m" style="left:1055px;top:30px;color:#6d6d6d">复制 SVG</div>
<div class="t m" style="left:1055px;top:47px;color:#000000">复制图层…</div>
<div class="t m" style="left:1055px;top:64px;color:#000000">删除图层</div>
<div class="t m" style="left:1055px;top:81px;color:#000000">从图层建立组…</div>
<div class="t m" style="left:1055px;top:110px;color:#000000">快速导出为 PNG</div>
<div class="t m" style="left:1055px;top:126px;color:#000000">导出为…</div>
<div class="t m" style="left:1055px;top:154px;color:#000000">来自图层的画板…</div>
<div class="t m" style="left:1055px;top:171px;color:#000000">来自图层的画框…</div>
<div class="t m" style="left:1055px;top:188px;color:#6d6d6d">转换为图框</div>
<div class="a" style="left:1036px;top:213px;width:121px;height:16px;background:#3d91eb"></div>
<div class="t m" style="left:1055px;top:215px;color:#ffffff">转换为智能对象</div>
<div class="t m" style="left:1055px;top:244px;color:#000000">栅格化图层</div>
<div class="t m" style="left:1055px;top:261px;color:#6d6d6d">栅格化图层样式</div>
<div class="t m" style="left:1055px;top:289px;color:#6d6d6d">启用图层蒙版</div>
<div class="t m" style="left:1055px;top:306px;color:#6d6d6d">停用矢量蒙版</div>
<div class="t m" style="left:1055px;top:323px;color:#000000">创建剪贴蒙版</div>
<div class="t m" style="left:1055px;top:350px;color:#000000">链接图层</div>
<div class="t m" style="left:1055px;top:368px;color:#6d6d6d">选择链接图层</div>
<div class="t m" style="left:1055px;top:396px;color:#6d6d6d">拷贝图层样式</div>
<div class="t m" style="left:1055px;top:413px;color:#6d6d6d">粘贴图层样式</div>
<div class="t m" style="left:1055px;top:430px;color:#6d6d6d">清除图层样式</div>
<div class="t m" style="left:1055px;top:458px;color:#6d6d6d">复制形状属性</div>
<div class="t m" style="left:1055px;top:475px;color:#6d6d6d">粘贴形状属性</div>
<div class="t m" style="left:1055px;top:503px;color:#6d6d6d">从隔离图层释放</div>
<div class="t m" style="left:1055px;top:531px;color:#000000">合并形状</div>
<div class="t m" style="left:1055px;top:548px;color:#000000">合并可见图层</div>
<div class="t m" style="left:1055px;top:565px;color:#000000">拼合图像</div>
<div class="a" style="left:900px;top:160px;width:119px;height:224px;border:4px solid #d11a1e"></div>
<div class="a" style="left:1024px;top:204px;width:140px;height:38px;border:3px solid #d11a1e"></div>
</body></html>
